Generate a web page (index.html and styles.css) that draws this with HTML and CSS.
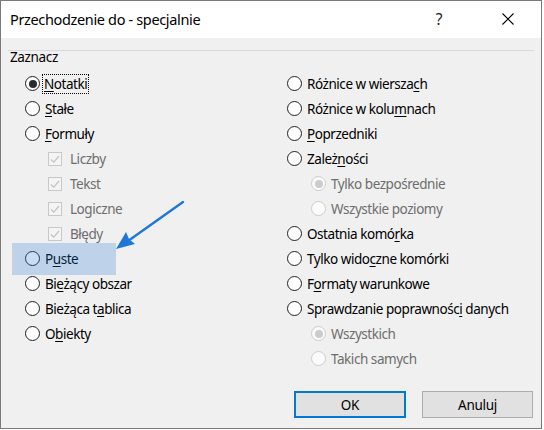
FILE: index.html
```html
<!DOCTYPE html>
<html lang="pl">
<head>
<meta charset="utf-8">
<title>Przechodzenie do - specjalnie</title>
<link rel="stylesheet" href="styles.css">
</head>
<body>
<div class="window">
  <div class="titlebar">
    <span class="title">Przechodzenie do - specjalnie</span>
    <span class="help">?</span>
    <span class="close"><svg width="12" height="12" viewBox="0 0 12 12"><path d="M0.5 0.5 L11.5 11.5 M11.5 0.5 L0.5 11.5" stroke="#000" stroke-width="1.1" fill="none"/></svg></span>
  </div>
  <div class="body">
    <div class="group">
      <div class="legend">Zaznacz</div>
      <div class="cols">
        <div class="col">
          <div class="opt"><span class="radio checked"></span><span class="lbl focus"><u>N</u>otatki</span></div>
          <div class="opt"><span class="radio"></span><span class="lbl"><u>S</u>tałe</span></div>
          <div class="opt"><span class="radio"></span><span class="lbl"><u>F</u>ormuły</span></div>
          <div class="opt sub-check"><span class="check"><svg width="12" height="12" viewBox="0 0 12 12"><path d="M2 6.5 L4.8 9.2 L10 3" stroke="#c2c2c2" stroke-width="1.2" fill="none"/></svg></span><span class="lbl dis">Liczby</span></div>
          <div class="opt sub-check"><span class="check"><svg width="12" height="12" viewBox="0 0 12 12"><path d="M2 6.5 L4.8 9.2 L10 3" stroke="#c2c2c2" stroke-width="1.2" fill="none"/></svg></span><span class="lbl dis">Tekst</span></div>
          <div class="opt sub-check"><span class="check"><svg width="12" height="12" viewBox="0 0 12 12"><path d="M2 6.5 L4.8 9.2 L10 3" stroke="#c2c2c2" stroke-width="1.2" fill="none"/></svg></span><span class="lbl dis">Logiczne</span></div>
          <div class="opt sub-check"><span class="check"><svg width="12" height="12" viewBox="0 0 12 12"><path d="M2 6.5 L4.8 9.2 L10 3" stroke="#c2c2c2" stroke-width="1.2" fill="none"/></svg></span><span class="lbl dis">Błędy</span></div>
          <div class="opt"><span class="radio"></span><span class="lbl">P<u>u</u>ste</span></div>
          <div class="opt"><span class="radio"></span><span class="lbl">Bi<u>e</u>żący obszar</span></div>
          <div class="opt"><span class="radio"></span><span class="lbl">Bieżąca t<u>a</u>blica</span></div>
          <div class="opt"><span class="radio"></span><span class="lbl">O<u>b</u>iekty</span></div>
        </div>
        <div class="col">
          <div class="opt"><span class="radio"></span><span class="lbl">Różnice w wiersza<u>c</u>h</span></div>
          <div class="opt"><span class="radio"></span><span class="lbl">Różnice w kolu<u>m</u>nach</span></div>
          <div class="opt"><span class="radio"></span><span class="lbl"><u>P</u>oprzedniki</span></div>
          <div class="opt"><span class="radio"></span><span class="lbl">Zależ<u>n</u>ości</span></div>
          <div class="opt sub-radio"><span class="radio disabled checked"></span><span class="lbl dis">Tylko bezpośrednie</span></div>
          <div class="opt sub-radio"><span class="radio disabled"></span><span class="lbl dis">Wszystkie poziomy</span></div>
          <div class="opt"><span class="radio"></span><span class="lbl">Ostatnia komó<u>r</u>ka</span></div>
          <div class="opt"><span class="radio"></span><span class="lbl">Tylko wido<u>c</u>zne komórki</span></div>
          <div class="opt"><span class="radio"></span><span class="lbl">F<u>o</u>rmaty warunkowe</span></div>
          <div class="opt"><span class="radio"></span><span class="lbl">Sprawdzanie poprawnośc<u>i</u> danych</span></div>
          <div class="opt sub-radio"><span class="radio disabled checked"></span><span class="lbl dis">Wszystkich</span></div>
          <div class="opt sub-radio"><span class="radio disabled"></span><span class="lbl dis">Takich samych</span></div>
        </div>
      </div>
    </div>
    <div class="buttons">
      <button class="btn default">OK</button>
      <button class="btn">Anuluj</button>
    </div>
  </div>
  <div class="highlight"></div>
  <svg class="arrow" width="542" height="429" viewBox="0 0 542 429">
    <line x1="182" y1="201" x2="127" y2="240" stroke="#1f78d6" stroke-width="2.4" stroke-linecap="round"/>
    <polygon points="115,248 125,231 128,238 134,243" fill="#1f78d6"/>
  </svg>
</div>
</body>
</html>
```
FILE: styles.css
```css
html, body {
  margin: 0;
  padding: 0;
  background: #ffffff;
}
body {
  font-family: "Noto Sans", "Open Sans", sans-serif;
  font-size: 13.5px;
  color: #000;
}
.window {
  position: relative;
  width: 542px;
  height: 429px;
  box-sizing: border-box;
  border: 1px solid #7a7a7a;
  background: #f0f0f0;
}
.titlebar {
  height: 37px;
  background: #ffffff;
  display: flex;
  align-items: center;
  padding: 0 27px 0 9px;
}
.title {
  flex: 1;
  font-size: 14.5px;
  letter-spacing: -0.35px;
  position: relative;
  top: -1px;
}
.help {
  width: 20px;
  text-align: center;
  font-size: 15.5px;
  color: #222;
  margin-right: 53px;
  position: relative;
  top: -1px;
}
.close {
  display: flex;
  width: 12px;
  height: 12px;
  position: relative;
  top: -1px;
}
.body {
  padding: 12px 7px 0 7px;
}
.group {
  border-top: 1px solid #d9d9d9;
}
.legend {
  padding-left: 2px;
  line-height: 13px;
  height: 13px;
  letter-spacing: -0.35px;
}
.cols {
  margin-top: 7px;
  padding-left: 17px;
  display: grid;
  grid-template-columns: 262px 1fr;
}
.opt {
  display: flex;
  align-items: center;
  height: 25px;
  gap: 5px;
  letter-spacing: -0.45px;
  white-space: nowrap;
}
.radio {
  flex: none;
  width: 15px;
  height: 15px;
  box-sizing: border-box;
  border: 1.2px solid #222;
  border-radius: 50%;
  background: #fff;
  display: flex;
  align-items: center;
  justify-content: center;
}
.radio.checked::after {
  content: "";
  width: 8px;
  height: 8px;
  border-radius: 50%;
  background: #2b2b2b;
}
.radio.disabled {
  border-color: #cccccc;
  background: #fbfbfb;
}
.radio.disabled.checked::after {
  background: #cccccc;
}
.sub-radio {
  padding-left: 24px;
}
.sub-check {
  padding-left: 23px;
  gap: 8px;
}
.check {
  flex: none;
  width: 14px;
  height: 14px;
  box-sizing: border-box;
  border: 1px solid #c8c8c8;
  background: #f4f4f4;
  display: flex;
  align-items: center;
  justify-content: center;
}
.lbl {
  line-height: 18px;
}
.lbl u {
  text-underline-offset: 2px;
}
.lbl.dis {
  color: #6d6d6d;
}
.lbl.focus {
  outline: 1px dotted #000;
  outline-offset: 0;
  padding: 0 1px;
  margin-left: -2px;
}
.buttons {
  display: flex;
  justify-content: flex-end;
  gap: 16px;
  margin-top: 20px;
  padding-right: 1px;
}
.btn {
  font-family: "Noto Sans", "Open Sans", sans-serif;
  font-size: 13.5px;
  color: #000;
  height: 27px;
  width: 111px;
  box-sizing: border-box;
  background: #e1e1e1;
  border: 1px solid #adadad;
  padding: 0;
  letter-spacing: -0.3px;
}
.btn.default {
  width: 112px;
  border: 2px solid #0078d7;
}
.highlight {
  position: absolute;
  left: 11px;
  top: 242px;
  width: 104px;
  height: 32px;
  background: rgba(40, 125, 215, 0.25);
}
.arrow {
  position: absolute;
  left: 0;
  top: 0;
  pointer-events: none;
}
```
